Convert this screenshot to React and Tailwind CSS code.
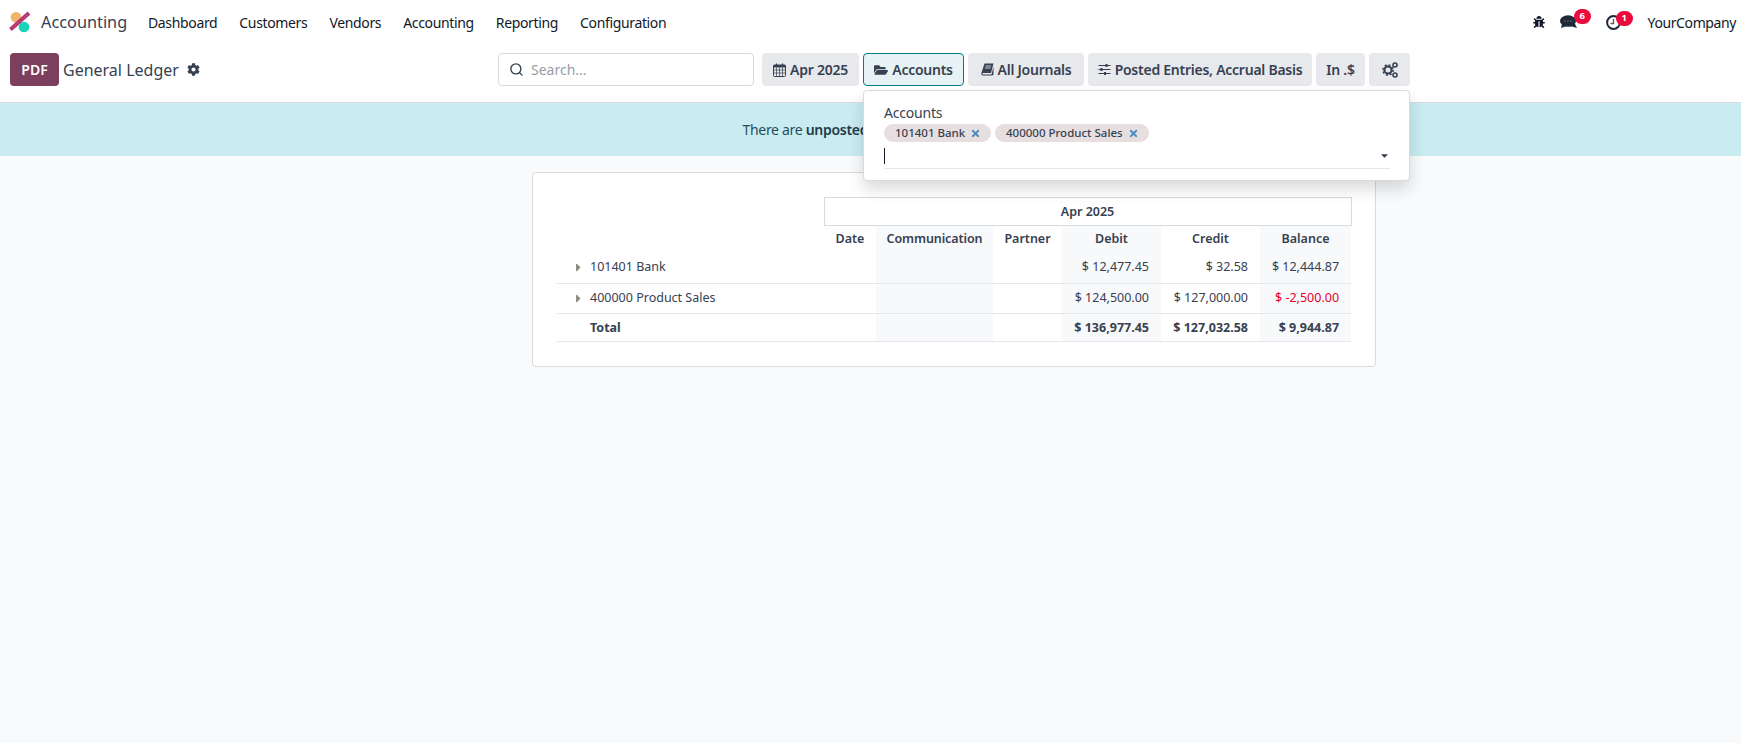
import React from 'react'
import { FaBug, FaCog, FaFolderOpen, FaCaretRight, FaCaretDown, FaTimes } from 'react-icons/fa'
import { Search } from 'lucide-react'

const menu = ['Dashboard', 'Customers', 'Vendors', 'Accounting', 'Reporting', 'Configuration']

const rows = [
    { name: '101401 Bank', debit: '$ 12,477.45', credit: '$ 32.58', balance: '$ 12,444.87', h: 'h-[33px]', pad: 'pt-[2px]' },
    { name: '400000 Product Sales', debit: '$ 124,500.00', credit: '$ 127,000.00', balance: '$ -2,500.00', red: true, h: 'h-[30px]', pad: 'pt-0' },
]

const Logo = () => (
    <svg width="22" height="22" viewBox="0 0 22 22" className="shrink-0">
        <circle cx="7" cy="6.2" r="5.3" fill="#f0b468" />
        <circle cx="15" cy="16" r="5.3" fill="#1ad3bb" />
        <path d="M1.5 18.5 L20 2" stroke="#b3366f" strokeWidth="4" />
        <path d="M1.5 18.5 L20 2" stroke="#d9709f" strokeWidth="1" strokeDasharray="1 2" />
    </svg>
)

const Comments = () => (
    <svg width="18" height="14" viewBox="0 0 18 14" className="block">
        <path d="M10 9 h5 l2 4 l-5 -1.5 h-3z" fill="#1f2937" />
        <ellipse cx="8" cy="6" rx="8" ry="5.8" fill="#1f2937" />
        <path d="M2 9 L1 13 L7 11z" fill="#1f2937" />
        <circle cx="5" cy="6" r="0.8" fill="#6b7280" />
        <circle cx="8" cy="6" r="0.8" fill="#6b7280" />
        <circle cx="11" cy="6" r="0.8" fill="#6b7280" />
    </svg>
)

const Clock = () => (
    <svg width="15" height="15" viewBox="0 0 15 15" className="block">
        <circle cx="7.5" cy="7.5" r="6.4" fill="none" stroke="#1f2937" strokeWidth="2" />
        <path d="M7.5 4 V8.5 H4.5" fill="none" stroke="#6b5b4b" strokeWidth="1.4" />
    </svg>
)

const Calendar = () => (
    <svg width="13" height="14" viewBox="0 0 13 14" className="shrink-0">
        <rect x="0.5" y="2" width="12" height="11.5" rx="1" fill="none" stroke="#374151" />
        <rect x="0.5" y="2" width="12" height="2.5" fill="#374151" />
        <path d="M3.5 0.5v3M9.5 0.5v3" stroke="#374151" strokeWidth="1.4" />
        <path d="M0.5 7h12M0.5 10h12M3.5 4.5v9M6.5 4.5v9M9.5 4.5v9" stroke="#374151" strokeWidth="0.7" />
    </svg>
)

const Book = () => (
    <svg width="13" height="13" viewBox="0 0 13 13" className="shrink-0">
        <path d="M3.5 0.5H12.5L10 10H2c-1 0-1 1.5 0 1.5h8.5l2-8v8l-1 1H2C0.5 12.5 0 11.5 0.4 10z" fill="#374151" />
        <path d="M4.5 3h5.5M4 5h5.5" stroke="#e7e9ed" strokeWidth="0.8" />
    </svg>
)

const Sliders = () => (
    <svg width="13" height="13" viewBox="0 0 13 13" className="shrink-0">
        <path d="M0.5 2.5h12M0.5 6.5h12M0.5 10.5h12" stroke="#374151" strokeWidth="1" />
        <path d="M8.5 1v3M3.5 5v3M7 9v3" stroke="#374151" strokeWidth="2" />
    </svg>
)

const Gears = () => (
    <svg width="16" height="16" viewBox="0 0 16 16">
        <circle cx="6" cy="8" r="3.6" fill="none" stroke="#374151" strokeWidth="2.2" />
        <circle cx="6" cy="8" r="5.2" fill="none" stroke="#374151" strokeWidth="1.4" strokeDasharray="2 2.08" />
        <circle cx="13" cy="3" r="2" fill="none" stroke="#374151" strokeWidth="1.6" />
        <circle cx="13" cy="13" r="2" fill="none" stroke="#374151" strokeWidth="1.6" />
    </svg>
)

const Badge = ({ className, children }) => (
    <span className={`absolute w-[17px] h-[15px] rounded-full bg-[#ea0b3d] text-white text-[9.5px] font-bold flex items-center justify-center ${className}`}>{children}</span>
)

const FilterBtn = ({ icon, children, className }) => (
    <button className={`h-[33px] rounded bg-[#e7e9ed] text-[#374151] text-[14px] font-semibold tracking-[-0.25px] flex items-center justify-center gap-[4px] ${className}`}>
        {icon}
        {children}
    </button>
)

const Tag = ({ children, className }) => (
    <span className={`h-[18px] rounded-full bg-[#e7dfdf] text-[#374151] text-[11.5px] font-medium flex items-center gap-[5px] pl-[11px] ${className}`}>
        {children}
        <FaTimes className="text-[#4a8cc0] text-[11px]" />
    </span>
)

export default function App() {
    return (
        <div className="min-h-[743px] bg-[#f9fafb] text-[#374151] font-['Noto_Sans',sans-serif] text-[14px]">
            {/* top navbar */}
            <div className="h-[46px] bg-white flex items-center pl-[9px] pr-[5px] pb-[2px]">
                <Logo />
                <span className="ml-[10px] text-[16.3px] text-[#374151] w-[107px]">Accounting</span>
                <div className="flex gap-[22px] text-[#111827] text-[14px] tracking-[-0.35px]">
                    {menu.map((m) => <span key={m}>{m}</span>)}
                </div>
                <div className="ml-auto flex items-center text-[#111827]">
                    <FaBug className="text-[12px] text-[#111827]" />
                    <span className="relative ml-[15px]"><Comments /><Badge className="-top-[6px] left-[14px]">6</Badge></span>
                    <span className="relative ml-[28px]"><Clock /><Badge className="-top-[4px] left-[10px]">1</Badge></span>
                    <span className="ml-[27px] text-[14px] tracking-[-0.4px]">YourCompany</span>
                </div>
            </div>

            {/* control panel */}
            <div className="h-[57px] bg-white border-b border-[#d8dadd] flex items-start pt-[7px] relative">
                <div className="w-[498px] pl-[10px] flex items-center shrink-0">
                    <button className="w-[49px] h-[33px] rounded bg-[#7c405e] text-white text-[14px] font-semibold">PDF</button>
                    <span className="ml-[4px] text-[16px]">General Ledger</span>
                    <FaCog className="ml-[8px] text-[13px]" />
                </div>
                <div className="w-[256px] h-[33px] rounded border border-[#d8dadd] flex items-center pl-[10px] gap-[7px] shrink-0">
                    <Search size={15} strokeWidth={2.2} className="text-[#374151]" />
                    <span className="text-[#9a9ca5]">Search...</span>
                </div>
                <div className="ml-[8px] flex gap-[4px]">
                    <FilterBtn className="w-[97px]" icon={<Calendar />}>Apr 2025</FilterBtn>
                    <FilterBtn className="w-[101px] !bg-[#e6f2f3] border border-[#017e84] text-[#111827]" icon={<FaFolderOpen className="text-[14px]" />}>Accounts</FilterBtn>
                    <FilterBtn className="w-[116px]" icon={<Book />}>All Journals</FilterBtn>
                    <FilterBtn className="w-[224px]" icon={<Sliders />}>Posted Entries, Accrual Basis</FilterBtn>
                    <FilterBtn className="w-[49px]">In .$</FilterBtn>
                    <FilterBtn className="w-[41px]" icon={<Gears />} />
                </div>

                {/* accounts dropdown */}
                <div className="absolute z-10 left-[863px] top-[44px] w-[547px] h-[91px] bg-white rounded border border-[#d8dadd] shadow-[0_8px_16px_rgba(0,0,0,0.15)] pl-[20px] pr-[19px] pt-[12px]">
                    <div className="text-[14px] leading-[19px] tracking-[-0.2px]">Accounts</div>
                    <div className="flex gap-[4px] mt-[2px]">
                        <Tag className="w-[107px]">101401 Bank</Tag>
                        <Tag className="w-[154px]">400000 Product Sales</Tag>
                    </div>
                    <div className="mt-[4px] h-[23px] border-b border-[#e5e7eb] flex items-start relative">
                        <span className="w-px h-[16px] mt-[2px] bg-[#111827]" />
                        <FaCaretDown className="absolute right-0 top-[4px] text-[11px] text-[#374151]" />
                    </div>
                </div>
            </div>

            {/* notice */}
            <div className="h-[53px] bg-[#c9ecf1] flex items-center justify-center text-[#1f4e5f] tracking-[-0.3px]">
                <span>There are <b className="font-semibold text-[#1e3a4c]">unposted</b> entries in the period</span>
            </div>

            {/* report */}
            <div className="mt-[16px] ml-[532px] w-[844px] h-[195px] bg-white rounded border border-[#d8dadd] pt-[24px] pl-[24px]">
                <table className="w-[794px] table-fixed border-collapse text-[12.5px] text-[#374151]">
                    <colgroup>
                        <col className="w-[267px]" />
                        <col className="w-[52px]" />
                        <col className="w-[117px]" />
                        <col className="w-[69px]" />
                        <col className="w-[99px]" />
                        <col className="w-[99px]" />
                        <col className="w-[91px]" />
                    </colgroup>
                    <thead>
                        <tr className="h-[28px]">
                            <th />
                            <th colSpan={6} className="border border-[#d8dadd] text-center font-semibold pt-[2px]">Apr 2025</th>
                        </tr>
                        <tr className="h-[25px] font-semibold">
                            <th />
                            <th className="font-semibold text-center pt-[3px]">Date</th>
                            <th className="font-semibold text-center bg-[#f8f9fa] pt-[3px] tracking-[-0.1px]">Communication</th>
                            <th className="font-semibold text-center pt-[3px]">Partner</th>
                            <th className="font-semibold text-center bg-[#f8f9fa] pt-[3px]">Debit</th>
                            <th className="font-semibold text-center pt-[3px]">Credit</th>
                            <th className="font-semibold text-center bg-[#f8f9fa] pt-[3px]">Balance</th>
                        </tr>
                    </thead>
                    <tbody>
                        {rows.map((r) => (
                            <tr key={r.name} className={`${r.h} border-b border-[#e5e7eb]`}>
                                <td className={r.pad}>
                                    <div className="flex items-center pl-[15px]">
                                        <FaCaretRight className="text-[13px] text-[#8a8a80]" />
                                        <span className="ml-[5px]">{r.name}</span>
                                    </div>
                                </td>
                                <td />
                                <td className="bg-[#f8f9fa]" />
                                <td />
                                <td className={`bg-[#f8f9fa] text-right pr-[12px] ${r.pad}`}>{r.debit}</td>
                                <td className={`text-right pr-[12px] ${r.pad}`}>{r.credit}</td>
                                <td className={`bg-[#f8f9fa] text-right pr-[12px] ${r.pad} ${r.red ? 'text-[#e4002b]' : ''}`}>{r.balance}</td>
                            </tr>
                        ))}
                        <tr className="h-[28px] border-b border-[#e5e7eb] font-bold">
                            <td className="pl-[33px] pt-[2px]">Total</td>
                            <td />
                            <td className="bg-[#f8f9fa]" />
                            <td />
                            <td className="bg-[#f8f9fa] text-right pr-[12px] pt-[2px]">$ 136,977.45</td>
                            <td className="text-right pr-[12px] pt-[2px]">$ 127,032.58</td>
                            <td className="bg-[#f8f9fa] text-right pr-[12px] pt-[2px]">$ 9,944.87</td>
                        </tr>
                    </tbody>
                </table>
            </div>
        </div>
    )
}
